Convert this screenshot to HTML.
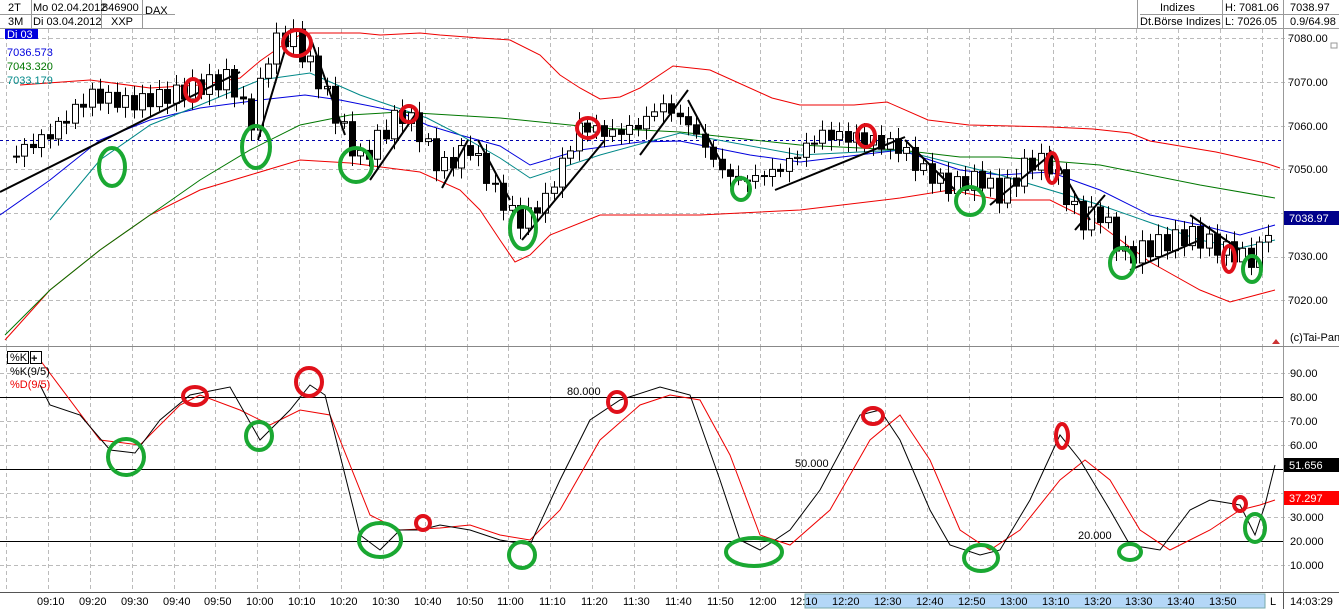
<!DOCTYPE html>
<html><head><meta charset="utf-8"><style>
body{margin:0;background:#fff;width:1339px;height:609px;overflow:hidden;font-family:"Liberation Sans",sans-serif}
svg{display:block}
text{font-family:"Liberation Sans",sans-serif;font-size:11px}
</style></head><body>
<svg id="s" width="1339" height="609" xmlns="http://www.w3.org/2000/svg">
<rect width="1339" height="609" fill="#fff"/>
<g stroke="#999" fill="none" stroke-width="1">
<line x1="0" y1="28.5" x2="1339" y2="28.5"/>
<line x1="0" y1="14.5" x2="175" y2="14.5"/>
<line x1="1140" y1="14.5" x2="1283" y2="14.5"/>
<line x1="1283" y1="14.5" x2="1339" y2="14.5"/>
<line x1="31.5" y1="0" x2="31.5" y2="28"/>
<line x1="101.5" y1="0" x2="101.5" y2="28"/>
<line x1="142.5" y1="0" x2="142.5" y2="28"/>
<line x1="1137.5" y1="0" x2="1137.5" y2="28"/>
<line x1="1222.5" y1="0" x2="1222.5" y2="28"/>
</g>
<line x1="1283.5" y1="0" x2="1283.5" y2="28" stroke="#999"/>
<g fill="#000">
<text x="8" y="11">2T</text><text x="8" y="25">3M</text>
<text x="33" y="11">Mo 02.04.2012</text><text x="33" y="25">Di 03.04.2012</text>
<text x="102" y="11">846900</text><text x="111" y="25">XXP</text>
<text x="145" y="14">DAX</text>
<text x="1160" y="11">Indizes</text><text x="1140" y="25">Dt.Börse Indizes</text>
<text x="1225" y="11">H: 7081.06</text><text x="1225" y="25">L: 7026.05</text>
<text x="1290" y="11">7038.97</text><text x="1290" y="25">0.9/64.98</text>
</g>
<g id="grid" stroke="#bbb" stroke-dasharray="4,3" stroke-width="1"></g>
<g stroke="#999"><line x1="1283.5" y1="28" x2="1283.5" y2="592"/><line x1="0" y1="346.5" x2="1339" y2="346.5" stroke="#888"/><line x1="0" y1="592.5" x2="1339" y2="592.5" stroke="#555"/></g>
<line x1="0" y1="140.5" x2="1283" y2="140.5" stroke="#00a" stroke-dasharray="3,3"/>
<g stroke="#000"><line x1="0" y1="397.5" x2="1283" y2="397.5"/><line x1="0" y1="469.5" x2="1283" y2="469.5"/><line x1="0" y1="541.5" x2="1283" y2="541.5"/></g>
<g fill="#000"><text x="567" y="395">80.000</text><text x="795" y="467">50.000</text><text x="1078" y="539">20.000</text></g>
<g fill="none" stroke-width="1">
<polyline stroke="#e00" points="20,85 90,80 150,88 200,85 240,78 260,61 280,47 300,35 310,33 360,33 380,35 420,33 440,35 480,38 510,40 540,55 560,75 580,88 600,99 620,97 640,88 673,66 710,70 772,98 800,105 854,105 887,102 928,120 969,125 1051,127 1093,129 1130,133 1150,141 1216,152 1265,163 1280,168"/>
<polyline stroke="#e00" points="5,340 50,290 100,250 150,215 200,190 250,175 300,160 350,163 420,172 460,190 480,210 500,240 515,262 530,255 550,235 600,215 700,215 800,210 900,198 950,190 1000,200 1050,200 1100,225 1150,262 1200,290 1230,302 1275,290"/>
<polyline stroke="#00d" points="0,215 50,180 100,140 150,120 200,108 260,100 305,95 340,100 400,112 427,125 460,135 500,146 530,165 580,150 640,142 680,141 750,155 800,162 900,150 960,170 1000,175 1050,172 1100,190 1150,215 1200,225 1240,235 1275,225"/>
<polyline stroke="#070" points="5,335 50,290 100,250 150,215 200,180 250,150 300,125 350,115 400,112 500,118 600,128 680,132 800,145 900,150 960,157 1000,157 1100,165 1200,185 1275,198"/>
<polyline stroke="#088" points="50,220 100,160 150,125 200,105 260,80 310,73 360,95 427,118 460,135 500,158 530,178 600,155 680,133 800,155 900,150 1000,175 1100,205 1200,240 1240,248 1275,240"/>
</g>
<g id="candles"></g>
<g stroke="#000" stroke-width="2" fill="none">
<line x1="0" y1="192" x2="240" y2="72"/><line x1="258" y1="140" x2="288" y2="40"/><line x1="312" y1="42" x2="345" y2="135"/>
<line x1="370" y1="180" x2="415" y2="115"/><line x1="442" y1="188" x2="468" y2="140"/><line x1="478" y1="140" x2="510" y2="200"/>
<line x1="522" y1="240" x2="605" y2="140"/><line x1="640" y1="155" x2="688" y2="90"/><line x1="688" y1="100" x2="720" y2="160"/>
<line x1="775" y1="190" x2="905" y2="137"/><line x1="905" y1="140" x2="955" y2="190"/><line x1="990" y1="205" x2="1050" y2="155"/>
<line x1="1050" y1="150" x2="1090" y2="220"/><line x1="1075" y1="230" x2="1105" y2="195"/><line x1="1130" y1="270" x2="1200" y2="240"/><line x1="1190" y1="215" x2="1240" y2="250"/>
</g>
<polyline fill="none" stroke="#e00" points="40,360 100,440 140,445 180,405 200,395 240,410 270,425 300,410 330,415 370,515 400,530 440,528 470,525 500,535 530,540 560,510 600,440 640,405 670,395 700,400 730,455 760,535 790,545 830,510 870,440 900,415 930,460 960,530 990,550 1020,530 1060,480 1085,460 1110,480 1140,530 1170,550 1210,530 1240,510 1260,505 1275,500"/>
<polyline fill="none" stroke="#000" points="40,385 50,405 80,415 110,450 135,453 160,420 190,395 230,387 260,440 290,410 310,385 325,395 360,535 380,550 400,530 420,530 440,525 470,530 500,540 530,545 560,480 590,420 620,400 660,387 690,395 720,480 740,540 760,550 790,530 820,490 860,415 880,410 900,440 930,510 950,545 980,555 1000,550 1030,500 1060,435 1080,460 1110,510 1130,545 1160,550 1190,510 1210,500 1240,505 1255,535 1265,505 1275,465"/>
<g fill="none" stroke="#1aa832" stroke-width="4">
<ellipse cx="112" cy="167" rx="13" ry="19"/><ellipse cx="256" cy="147" rx="14" ry="21"/><ellipse cx="356" cy="165" rx="16" ry="17"/><ellipse cx="523" cy="228" rx="13" ry="21"/><ellipse cx="741" cy="189" rx="9" ry="11"/><ellipse cx="970" cy="201" rx="14" ry="14"/><ellipse cx="1122" cy="263" rx="12" ry="15"/><ellipse cx="1252" cy="269" rx="9" ry="13"/>
<ellipse cx="126" cy="457" rx="18" ry="18"/><ellipse cx="259" cy="436" rx="13" ry="14"/><ellipse cx="380" cy="540" rx="21" ry="17"/><ellipse cx="522" cy="555" rx="13" ry="13"/><ellipse cx="754" cy="552" rx="28" ry="14"/><ellipse cx="981" cy="558" rx="17" ry="13"/><ellipse cx="1130" cy="552" rx="11" ry="8"/><ellipse cx="1255" cy="528" rx="10" ry="14"/>
</g>
<g fill="none" stroke="#e0101a" stroke-width="4">
<ellipse cx="193" cy="90" rx="8" ry="11"/><ellipse cx="297" cy="43" rx="14" ry="13"/><ellipse cx="409" cy="114" rx="8" ry="8"/><ellipse cx="588" cy="128" rx="11" ry="10"/><ellipse cx="866" cy="136" rx="9" ry="11"/><ellipse cx="1052" cy="168" rx="6" ry="15"/><ellipse cx="1229" cy="259" rx="6" ry="13"/>
<ellipse cx="195" cy="396" rx="12" ry="9"/><ellipse cx="309" cy="382" rx="13" ry="14"/><ellipse cx="423" cy="523" rx="7" ry="7"/><ellipse cx="617" cy="402" rx="9" ry="10"/><ellipse cx="873" cy="416" rx="10" ry="8"/><ellipse cx="1062" cy="436" rx="6" ry="12"/><ellipse cx="1240" cy="504" rx="6" ry="7"/>
</g>
<rect x="5" y="29" width="33" height="10" fill="#0000dd"/><text x="7" y="38" fill="#fff" font-size="10">Di 03</text>
<text x="7" y="56" fill="#00d">7036.573</text><text x="7" y="70" fill="#070">7043.320</text><text x="7" y="84" fill="#088">7033.179</text>
<rect x="7.5" y="351.5" width="21" height="12" fill="#fff" stroke="#000"/><text x="10" y="361">%K</text>
<rect x="30.5" y="351.5" width="11" height="12" fill="#fff" stroke="#000"/><text x="31" y="362" font-weight="bold">+</text>
<text x="10" y="375">%K(9/5)</text><text x="10" y="388" fill="#e00">%D(9/5)</text>
<g fill="#000">
<text x="1288" y="42">7080.00</text><text x="1288" y="86">7070.00</text><text x="1288" y="130">7060.00</text><text x="1288" y="173">7050.00</text><text x="1288" y="260">7030.00</text><text x="1288" y="304">7020.00</text>
<text x="1290" y="341" font-size="10">(c)Tai-Pan</text>
<text x="1290" y="377">90.00</text><text x="1290" y="401">80.00</text><text x="1290" y="425">70.00</text><text x="1290" y="449">60.00</text><text x="1290" y="521">30.000</text><text x="1290" y="545">20.000</text><text x="1290" y="569">10.000</text>
</g>
<rect x="1331" y="43" width="6" height="5" fill="none" stroke="#999"/>
<polygon points="1272,344 1276,339 1280,344" fill="#c33"/>
<rect x="1284" y="211" width="55" height="14" fill="#00008b"/><text x="1289" y="222" fill="#fff">7038.97</text>
<rect x="1284" y="458" width="55" height="14" fill="#000"/><text x="1289" y="469" fill="#fff">51.656</text>
<rect x="1284" y="491" width="55" height="14" fill="#f00"/><text x="1289" y="502" fill="#fff">37.297</text>
<rect x="805" y="594" width="460" height="14" fill="#b4d7f7" stroke="#7aa"/>
<g id="times" fill="#000" font-size="10"></g>
<text x="1270" y="605">L</text><line x1="1283.5" y1="592" x2="1283.5" y2="609" stroke="#555"/><text x="1290" y="605">14:03:29</text>
</svg>
<script>
var NS="http://www.w3.org/2000/svg";
function el(p,t,a){var e=document.createElementNS(NS,t);for(var k in a)e.setAttribute(k,a[k]);p.appendChild(e);return e;}
var g=document.getElementById('grid');
for(var i=-1;i<=29;i++){var x=Math.round(48+41.86*i)+.5;if(x<1283){el(g,'line',{x1:x,y1:29,x2:x,y2:346});el(g,'line',{x1:x,y1:347,x2:x,y2:592});}}
[38,82,126,169,213,257,300].forEach(function(y){el(g,'line',{x1:0,y1:y+.5,x2:1290,y2:y+.5});});
[373,421,445,493,517,565].forEach(function(y){el(g,'line',{x1:0,y1:y+.5,x2:1290,y2:y+.5});});
var tg=document.getElementById('times');
for(var i=0;i<=28;i++){var m=9*60+10+i*10;var h=Math.floor(m/60),mm=m%60;var s=(h<10?'0':'')+h+':'+(mm<10?'0':'')+mm;var t=el(tg,'text',{x:Math.round(48+41.86*i)-11,y:605});t.textContent=s;}
var K=[[10,7053],[50,7058],[90,7067],[130,7065],[170,7067],[230,7071],[250,7060],[270,7078],[290,7081],[320,7070],[345,7058],[360,7052],[400,7063],[415,7060],[440,7050],[470,7055],[500,7043],[520,7038],[545,7043],[580,7060],[610,7058],[640,7060],[660,7065],[690,7060],[720,7050],[740,7047],[780,7050],[820,7058],[860,7057],[900,7055],[920,7050],[950,7046],[980,7048],[1000,7044],[1030,7052],[1050,7051],[1080,7038],[1100,7040],[1125,7030],[1160,7033],[1190,7035],[1230,7031],[1255,7029],[1270,7038]];
function P(x){for(var i=1;i<K.length;i++){if(x<=K[i][0]){var a=K[i-1],b=K[i];return a[1]+(b[1]-a[1])*(x-a[0])/(b[0]-a[0]);}}return K[K.length-1][1];}
function Y(p){return 38+(7080-p)*4.37;}
var cg=document.getElementById('candles');var prev=P(8);
for(var x=16;x<=1272;x+=8.4){var c=P(x)+Math.sin(x*0.37)*2.2;var o=prev;var hi=Math.max(o,c)+1+Math.abs(Math.sin(x*1.3))*1.5;var lo=Math.min(o,c)-1-Math.abs(Math.cos(x*0.9))*1.5;
var xc=Math.round(x)+.5;el(cg,'line',{x1:xc,y1:Y(hi),x2:xc,y2:Y(lo),stroke:'#000'});
var yt=Y(Math.max(o,c)),yb=Y(Math.min(o,c));if(yb-yt<1)yb=yt+1;
el(cg,'rect',{x:xc-3,y:yt,width:6,height:yb-yt,fill:c>=o?'#fff':'#000',stroke:'#000'});prev=c;}
</script>
</body></html>
